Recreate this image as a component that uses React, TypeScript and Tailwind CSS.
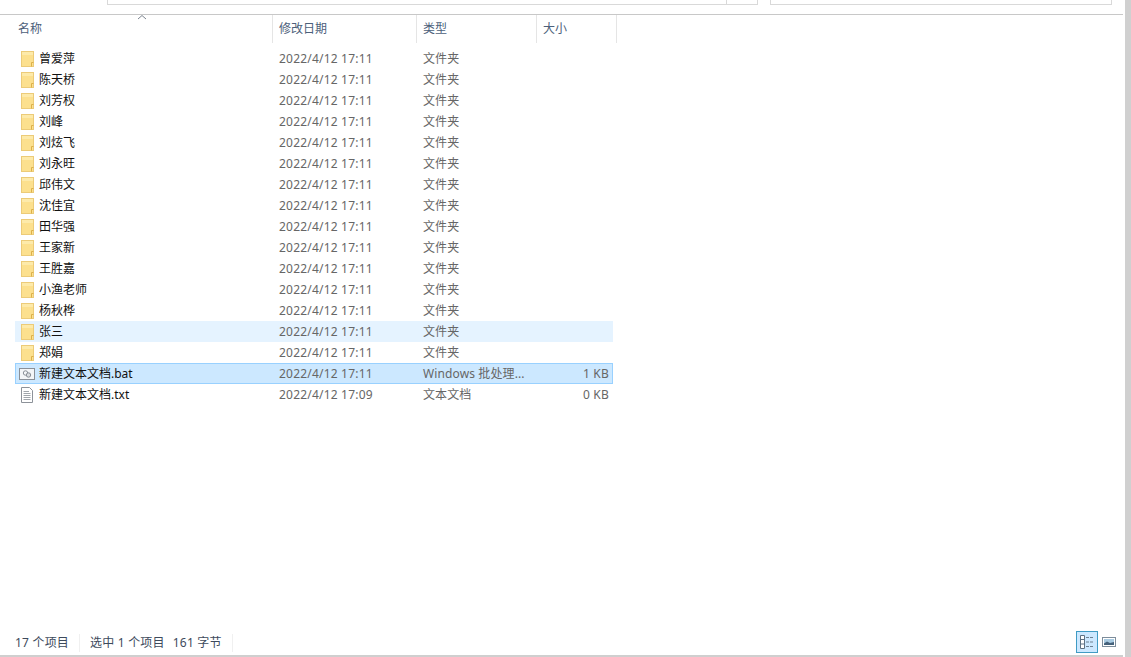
const files = [
  { name: '曾爱萍', date: '2022/4/12 17:11', type: '文件夹', size: '', icon: 'folder' },
  { name: '陈天桥', date: '2022/4/12 17:11', type: '文件夹', size: '', icon: 'folder' },
  { name: '刘芳权', date: '2022/4/12 17:11', type: '文件夹', size: '', icon: 'folder' },
  { name: '刘峰', date: '2022/4/12 17:11', type: '文件夹', size: '', icon: 'folder' },
  { name: '刘炫飞', date: '2022/4/12 17:11', type: '文件夹', size: '', icon: 'folder' },
  { name: '刘永旺', date: '2022/4/12 17:11', type: '文件夹', size: '', icon: 'folder' },
  { name: '邱伟文', date: '2022/4/12 17:11', type: '文件夹', size: '', icon: 'folder' },
  { name: '沈佳宜', date: '2022/4/12 17:11', type: '文件夹', size: '', icon: 'folder' },
  { name: '田华强', date: '2022/4/12 17:11', type: '文件夹', size: '', icon: 'folder' },
  { name: '王家新', date: '2022/4/12 17:11', type: '文件夹', size: '', icon: 'folder' },
  { name: '王胜嘉', date: '2022/4/12 17:11', type: '文件夹', size: '', icon: 'folder' },
  { name: '小渔老师', date: '2022/4/12 17:11', type: '文件夹', size: '', icon: 'folder' },
  { name: '杨秋桦', date: '2022/4/12 17:11', type: '文件夹', size: '', icon: 'folder' },
  { name: '张三', date: '2022/4/12 17:11', type: '文件夹', size: '', icon: 'folder', state: 'hover' },
  { name: '郑娟', date: '2022/4/12 17:11', type: '文件夹', size: '', icon: 'folder' },
  { name: '新建文本文档.bat', date: '2022/4/12 17:11', type: 'Windows 批处理...', size: '1 KB', icon: 'bat', state: 'selected' },
  { name: '新建文本文档.txt', date: '2022/4/12 17:09', type: '文本文档', size: '0 KB', icon: 'txt' },
];

function FolderIcon() {
  return (
    <svg width="13" height="16" viewBox="0 0 13 16" className="block ml-[5px]">
      <rect x="0.5" y="0.5" width="12" height="15" fill="#fce08e" stroke="#eccb78" />
      <rect x="1" y="1" width="11" height="3" fill="#fdeaaa" />
      <path d="M10.5 15.5V11.5H12.5" fill="none" stroke="#dcb04a" />
    </svg>
  );
}

function BatIcon() {
  return (
    <svg width="16" height="12" viewBox="0 0 16 12" className="block ml-[3px]">
      <rect x="0.5" y="0.5" width="15" height="11" fill="#f3f5f7" stroke="#8a9098" />
      <circle cx="6.5" cy="5" r="2.2" fill="none" stroke="#8a9098" />
      <circle cx="9.5" cy="7" r="2.2" fill="#d7dadd" stroke="#8a9098" />
    </svg>
  );
}

function TxtIcon() {
  return (
    <svg width="12" height="16" viewBox="0 0 12 16" className="block ml-[5px]">
      <path d="M0.5 0.5H8.5L11.5 3.5V15.5H0.5Z" fill="#fff" stroke="#8d9299" />
      <path d="M2.5 4.5H8M2.5 6.5H9.5M2.5 8.5H9.5M2.5 10.5H9.5M2.5 12.5H9.5" stroke="#a0a5ab" />
    </svg>
  );
}

function Row({ file }: { file: (typeof files)[number] }) {
  const rowClass =
    file.state === 'selected'
      ? 'bg-[#cce8ff] border border-[#99d1ff]'
      : file.state === 'hover'
        ? 'bg-[#e5f3ff] border border-[#e5f3ff]'
        : 'border border-transparent';

  return (
    <div className={`flex items-center h-[21px] w-[598px] text-[12px] ${rowClass}`}>
      <div className="w-[23px] flex justify-start shrink-0">
        {file.icon === 'folder' && <FolderIcon />}
        {file.icon === 'bat' && <BatIcon />}
        {file.icon === 'txt' && <TxtIcon />}
      </div>
      <div className="w-[240px] shrink-0 text-[#111111] whitespace-nowrap">{file.name}</div>
      <div className="w-[144px] shrink-0 text-[#666666] tracking-[0.2px] whitespace-nowrap">{file.date}</div>
      <div className="w-[114px] shrink-0 text-[#666666] tracking-[0.12px] whitespace-nowrap">{file.type}</div>
      <div className="w-[72px] shrink-0 text-right text-[#666666] tracking-[0.2px] whitespace-nowrap">{file.size}</div>
    </div>
  );
}

function HeaderCell({ label, width }: { label: string; width: string }) {
  return (
    <div className={`${width} h-[28px] shrink-0 border-r border-[#e5e5e5] pl-[6px] flex items-center text-[12px] text-[#4c607a]`}>
      {label}
    </div>
  );
}

export default function App() {
  return (
    <div
      className="w-[1131px] h-[657px] bg-white flex overflow-hidden"
      style={{ fontFamily: '"Noto Sans", "Noto Sans CJK SC", sans-serif' }}
    >
      <div className="w-[1125px] flex flex-col shrink-0">
        {/* address and search boxes, cut off by the top of the picture */}
        <div className="h-[14px] flex items-start shrink-0 pl-[107px]">
          <div className="w-[619px] h-[5px] border-b border-l border-[#d9d9d9]" />
          <div className="w-[32px] h-[5px] border-b border-x border-[#d9d9d9]" />
          <div className="w-[342px] h-[5px] ml-[12px] border-b border-x border-[#d9d9d9]" />
        </div>

        <div className="w-[1123px] border-t border-[#c8c8c8] flex flex-col flex-1 min-h-0">
          {/* column headers */}
          <div className="relative flex shrink-0">
            <div className="w-[273px] h-[28px] shrink-0 border-r border-[#e5e5e5] pl-[18px] flex items-center text-[12px] text-[#4c607a]">
              名称
              <svg width="10" height="6" viewBox="0 0 10 6" className="absolute left-[137px] top-[-1px]">
                <path d="M1 5L5 1.5L9 5" fill="none" stroke="#7d8590" />
              </svg>
            </div>
            <HeaderCell label="修改日期" width="w-[144px]" />
            <HeaderCell label="类型" width="w-[120px]" />
            <HeaderCell label="大小" width="w-[80px]" />
          </div>

          {/* file list */}
          <div className="flex-1 pt-[5px] pl-[15px]">
            {files.map((file) => (
              <Row key={file.name} file={file} />
            ))}
          </div>

          {/* status bar */}
          <div className="h-[26px] flex items-center justify-between shrink-0 text-[12px] text-[#3d4a5c]">
            <div className="flex items-center pl-[15px] pt-[2px] tracking-[0.2px]">
              <span className="pr-[10px] border-r border-[#f0f0f0]">17 个项目</span>
              <span className="pl-[10px] pr-[10px] border-r border-[#f0f0f0]">
                选中 1 个项目<span className="ml-[8px]">161 字节</span>
              </span>
            </div>
            <div className="flex items-center pr-[3px]">
              <div className="w-[22px] h-[22px] bg-[#cce8ff] border border-[#3f9bc4] flex items-center justify-center">
                <svg width="16" height="16" viewBox="0 0 16 16">
                  <path d="M1.5 1.5H5.5V14.5H1.5ZM1.5 5.5H5.5M1.5 10H5.5" fill="#fff" stroke="#5e7183" />
                  <path d="M7 3.5H15M7 8H15M7 12.5H15" stroke="#6f8191" strokeDasharray="3 1" />
                </svg>
              </div>
              <div className="w-[22px] h-[22px] flex items-center justify-center">
                <svg width="14" height="10" viewBox="0 0 14 10">
                  <rect x="0.5" y="0.5" width="13" height="9" fill="#fff" stroke="#7d8d9b" />
                  <rect x="2" y="2" width="10" height="6" fill="#a9cbe2" />
                  <path d="M2 6.5L5 4.5L8 6L12 5V8H2Z" fill="#45617a" />
                </svg>
              </div>
            </div>
          </div>
          <div className="h-[2px] shrink-0 bg-[#cfcfcf]" />
        </div>
      </div>
      <div className="flex-1 bg-[#d0d0d0]" />
    </div>
  );
}
